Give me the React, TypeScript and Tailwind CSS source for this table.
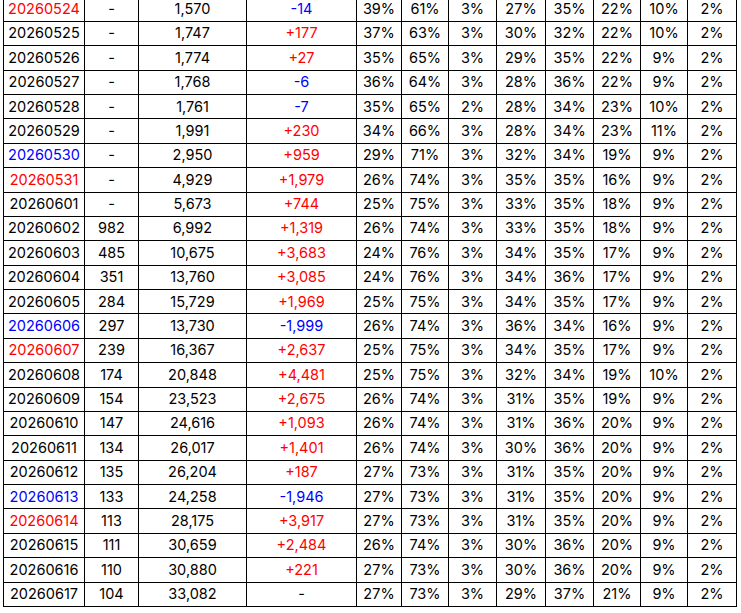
const RED = 'text-[#ff0000]';
const BLUE = 'text-[#0000ff]';

type Row = {
  date: string;
  dateColor?: 'red' | 'blue';
  a: string;
  total: string;
  diff: string;
  pcts: string[];
};

const rows: Row[] = [
  { date: '20260524', dateColor: 'red', a: '-', total: '1,570', diff: '-14', pcts: ['39%', '61%', '3%', '27%', '35%', '22%', '10%', '2%'] },
  { date: '20260525', a: '-', total: '1,747', diff: '+177', pcts: ['37%', '63%', '3%', '30%', '32%', '22%', '10%', '2%'] },
  { date: '20260526', a: '-', total: '1,774', diff: '+27', pcts: ['35%', '65%', '3%', '29%', '35%', '22%', '9%', '2%'] },
  { date: '20260527', a: '-', total: '1,768', diff: '-6', pcts: ['36%', '64%', '3%', '28%', '36%', '22%', '9%', '2%'] },
  { date: '20260528', a: '-', total: '1,761', diff: '-7', pcts: ['35%', '65%', '2%', '28%', '34%', '23%', '10%', '2%'] },
  { date: '20260529', a: '-', total: '1,991', diff: '+230', pcts: ['34%', '66%', '3%', '28%', '34%', '23%', '11%', '2%'] },
  { date: '20260530', dateColor: 'blue', a: '-', total: '2,950', diff: '+959', pcts: ['29%', '71%', '3%', '32%', '34%', '19%', '9%', '2%'] },
  { date: '20260531', dateColor: 'red', a: '-', total: '4,929', diff: '+1,979', pcts: ['26%', '74%', '3%', '35%', '35%', '16%', '9%', '2%'] },
  { date: '20260601', a: '-', total: '5,673', diff: '+744', pcts: ['25%', '75%', '3%', '33%', '35%', '18%', '9%', '2%'] },
  { date: '20260602', a: '982', total: '6,992', diff: '+1,319', pcts: ['26%', '74%', '3%', '33%', '35%', '18%', '9%', '2%'] },
  { date: '20260603', a: '485', total: '10,675', diff: '+3,683', pcts: ['24%', '76%', '3%', '34%', '35%', '17%', '9%', '2%'] },
  { date: '20260604', a: '351', total: '13,760', diff: '+3,085', pcts: ['24%', '76%', '3%', '34%', '36%', '17%', '9%', '2%'] },
  { date: '20260605', a: '284', total: '15,729', diff: '+1,969', pcts: ['25%', '75%', '3%', '34%', '35%', '17%', '9%', '2%'] },
  { date: '20260606', dateColor: 'blue', a: '297', total: '13,730', diff: '-1,999', pcts: ['26%', '74%', '3%', '36%', '34%', '16%', '9%', '2%'] },
  { date: '20260607', dateColor: 'red', a: '239', total: '16,367', diff: '+2,637', pcts: ['25%', '75%', '3%', '34%', '35%', '17%', '9%', '2%'] },
  { date: '20260608', a: '174', total: '20,848', diff: '+4,481', pcts: ['25%', '75%', '3%', '32%', '34%', '19%', '10%', '2%'] },
  { date: '20260609', a: '154', total: '23,523', diff: '+2,675', pcts: ['26%', '74%', '3%', '31%', '35%', '19%', '9%', '2%'] },
  { date: '20260610', a: '147', total: '24,616', diff: '+1,093', pcts: ['26%', '74%', '3%', '31%', '36%', '20%', '9%', '2%'] },
  { date: '20260611', a: '134', total: '26,017', diff: '+1,401', pcts: ['26%', '74%', '3%', '30%', '36%', '20%', '9%', '2%'] },
  { date: '20260612', a: '135', total: '26,204', diff: '+187', pcts: ['27%', '73%', '3%', '31%', '35%', '20%', '9%', '2%'] },
  { date: '20260613', dateColor: 'blue', a: '133', total: '24,258', diff: '-1,946', pcts: ['27%', '73%', '3%', '31%', '35%', '20%', '9%', '2%'] },
  { date: '20260614', dateColor: 'red', a: '113', total: '28,175', diff: '+3,917', pcts: ['27%', '73%', '3%', '31%', '35%', '20%', '9%', '2%'] },
  { date: '20260615', a: '111', total: '30,659', diff: '+2,484', pcts: ['26%', '74%', '3%', '30%', '36%', '20%', '9%', '2%'] },
  { date: '20260616', a: '110', total: '30,880', diff: '+221', pcts: ['27%', '73%', '3%', '30%', '36%', '20%', '9%', '2%'] },
  { date: '20260617', a: '104', total: '33,082', diff: '-', pcts: ['27%', '73%', '3%', '29%', '37%', '21%', '9%', '2%'] },
];

const cell = 'h-[24.375px] border border-black p-0 text-center align-middle leading-none';

function diffColor(d: string) {
  if (d.startsWith('+')) return RED;
  if (d.length > 1 && d.startsWith('-')) return BLUE;
  return 'text-black';
}

export default function App() {
  return (
    <div className="min-h-[613px] w-[741px] overflow-hidden bg-white pl-[3px] font-['Inter',sans-serif] text-[14.5px] text-black">
      <table className="mt-[-3.4px] w-[733px] table-fixed border-collapse">
        <colgroup>
          <col className="w-[81px]" />
          <col className="w-[54px]" />
          <col className="w-[108px]" />
          <col className="w-[110px]" />
          <col className="w-[45px]" />
          <col className="w-[47px]" />
          <col className="w-[48px]" />
          <col className="w-[49px]" />
          <col className="w-[48px]" />
          <col className="w-[47px]" />
          <col className="w-[47px]" />
          <col className="w-[49px]" />
        </colgroup>
        <tbody>
          {rows.map((r) => (
            <tr key={r.date}>
              <td className={`${cell} ${r.dateColor === 'red' ? RED : r.dateColor === 'blue' ? BLUE : ''}`}>{r.date}</td>
              <td className={cell}>{r.a}</td>
              <td className={cell}>{r.total}</td>
              <td className={`${cell} ${diffColor(r.diff)}`}>{r.diff}</td>
              {r.pcts.map((p, i) => (
                <td key={i} className={cell}>
                  {p}
                </td>
              ))}
            </tr>
          ))}
        </tbody>
      </table>
    </div>
  );
}
